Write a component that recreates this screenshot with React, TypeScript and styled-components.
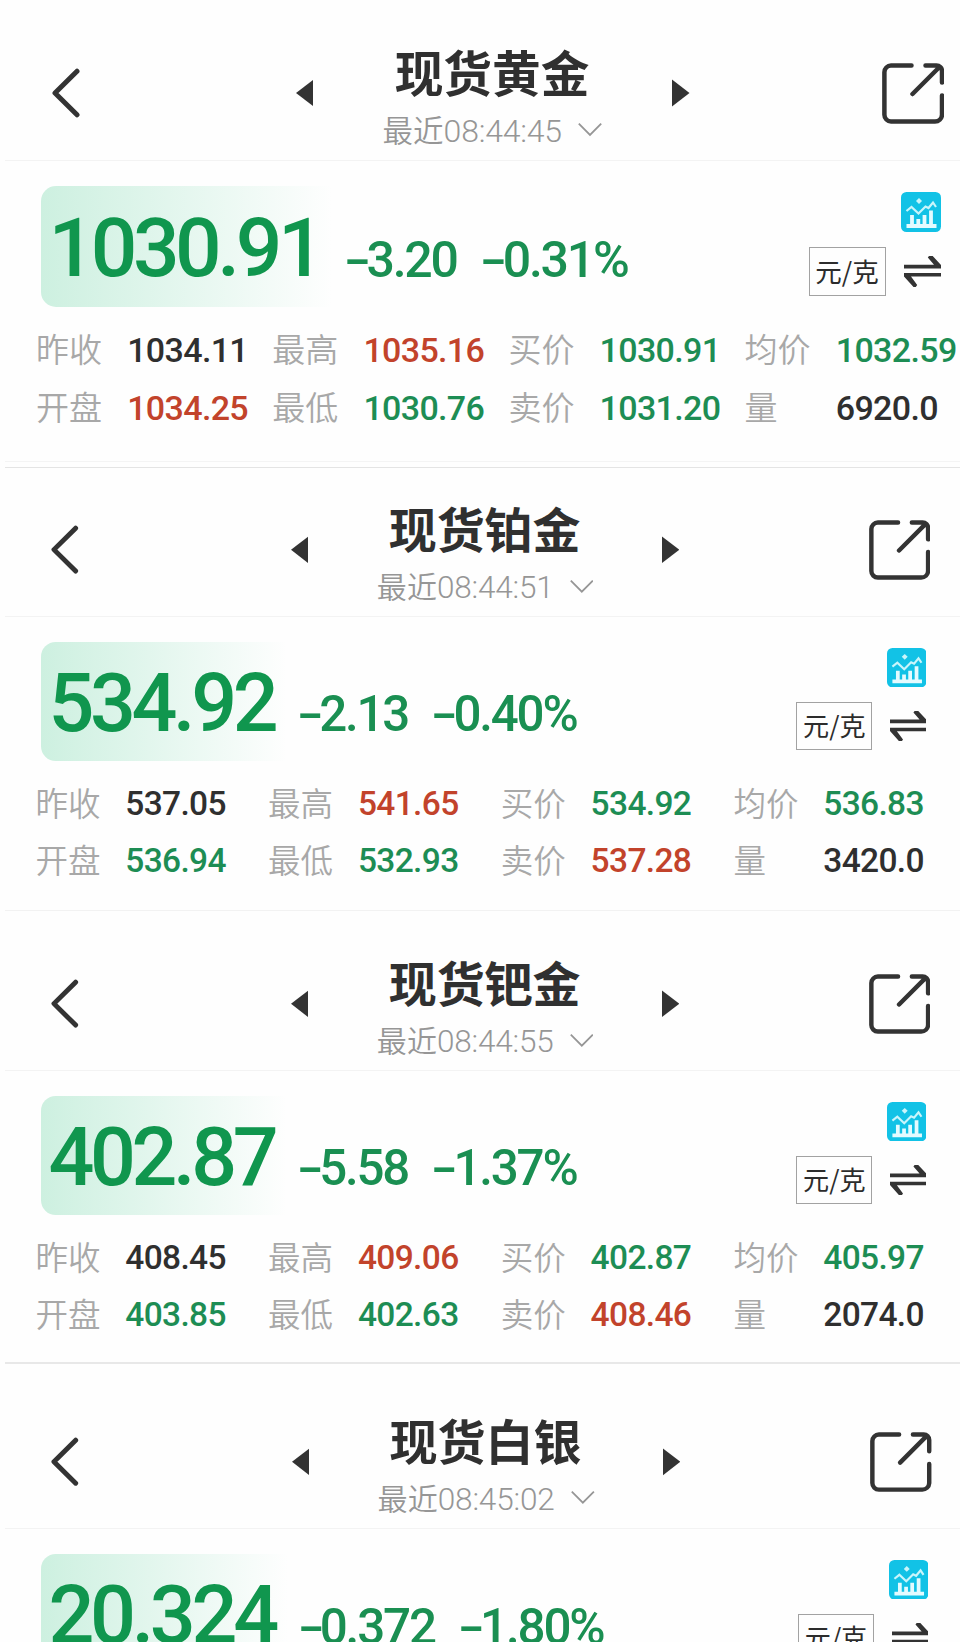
import React from 'react';
import styled, { createGlobalStyle } from 'styled-components';

const GlobalStyle = createGlobalStyle`
  * { box-sizing: border-box; }
  html, body { margin: 0; background: #fefefe; }
  body { height: 1642px; overflow: hidden; }
`;

const cjk = '"Noto Sans CJK SC", sans-serif';
const digits = 'Roboto, "Noto Sans CJK SC", sans-serif';

/* Sizes are given in design units; every panel sets its own --u. */
const u = (n: number) => `calc(${n} * var(--u))`;

type Tone = 'up' | 'down' | 'flat';
const tones: Record<Tone, string> = { up: '#c2432b', down: '#1d8d54', flat: '#2f2f2f' };

const Page = styled.main`
  width: 960px;
  height: 1642px;
  overflow: hidden;
  background: #fefefe;
  display: flex;
  flex-direction: column;
`;

const Panel = styled.section<{ $scale: number; $height: number }>`
  --u: ${p => p.$scale}px;
  flex: none;
  width: ${u(960)};
  height: ${p => p.$height}px;
  display: flex;
  flex-direction: column;
`;

const Divider = styled.hr<{ $color: string; $size?: number; $gap?: number }>`
  flex: none;
  width: 955px;
  height: ${p => p.$size ?? 1}px;
  margin: ${p => p.$gap ?? 0}px 0 0 5px;
  border: 0;
  background: ${p => p.$color};
`;

const Header = styled.header<{ $height: number }>`
  flex: none;
  height: ${p => p.$height}px;
  padding-left: ${u(52)};
  display: flex;
  align-items: flex-end;
`;

const HeaderRow = styled.div`
  height: ${u(134)};
  display: flex;
  align-items: center;
  color: #333;
  svg { display: block; flex: none; }
`;

const BackIcon = styled.svg`
  width: ${u(28)};
  height: ${u(50)};
  margin-right: ${u(215.5)};
`;

const Arrow = styled.svg`
  width: ${u(17.5)};
  height: ${u(28)};
`;

const ShareIcon = styled.svg`
  width: ${u(62)};
  height: ${u(61)};
  margin-left: ${u(192.5)};
`;

const Heading = styled.div`
  width: ${u(359)};
  height: 100%;
  padding-top: ${u(16.5)};
  display: flex;
  flex-direction: column;
  align-items: center;
  gap: ${u(11.5)};
`;

const Title = styled.h1`
  margin: 0 ${u(1)} 0 0;
  font: 700 ${u(48.7)} / ${u(56)} ${cjk};
  color: #303030;
  white-space: nowrap;
`;

const Updated = styled.div`
  display: flex;
  align-items: center;
  gap: ${u(16.5)};
  height: ${u(40)};
  color: #969696;
  font: 350 ${u(30.5)} / ${u(40)} ${cjk};
  white-space: nowrap;
`;

const Clock = styled.span`
  font: 350 ${u(32)} / ${u(40)} ${digits};
  letter-spacing: ${u(-0.2)};
`;

const ChevronIcon = styled.svg`
  width: ${u(24)};
  height: ${u(14)};
`;

const Quote = styled.div`
  flex: none;
  height: ${u(121)};
  margin-top: ${u(25)};
  padding: 0 ${u(19.5)} 0 41px;
  display: flex;
`;

const PriceChip = styled.div<{ $width: number }>`
  flex: none;
  width: ${p => u(p.$width)};
  padding: ${u(2)} 0 0 ${u(7.5)};
  border-radius: ${u(15)};
  background: linear-gradient(90deg, #cdf0e0 0%, #e2f6ed 42%, rgba(254, 254, 254, 0) 96%);
  color: #10964e;
  font: 550 ${u(82)} / ${u(121)} ${digits};
  letter-spacing: ${u(-4.4)};
  white-space: nowrap;
`;

const Change = styled.div`
  flex: 1;
  padding-top: ${u(36)};
  display: flex;
  gap: ${u(23.5)};
  color: #1a8f52;
  font: 550 ${u(50)} / ${u(75)} ${digits};
  letter-spacing: ${u(-2.2)};
  white-space: nowrap;
`;

const Sign = styled.span`
  display: inline-block;
  font-family: Inter, sans-serif;
  transform: scaleX(1.25);
  transform-origin: 0 50%;
  margin: 0 ${u(2.5)} 0 ${u(-1)};
`;

const Tools = styled.div`
  flex: none;
  padding-top: ${u(6)};
  display: flex;
  flex-direction: column;
  align-items: flex-end;
  gap: ${u(15)};
  svg { display: block; }
`;

const ChartIcon = styled.svg`
  width: ${u(40)};
  height: ${u(40)};
`;

const UnitRow = styled.div`
  display: flex;
  align-items: center;
  gap: ${u(18)};
`;

const UnitBox = styled.span`
  width: ${u(77)};
  height: ${u(49)};
  border: 1px solid #a2a2a2;
  color: #2c2c2c;
  font: 400 ${u(26.5)} / ${u(45)} ${cjk};
  text-align: center;
  white-space: nowrap;
`;

const SwapIcon = styled.svg`
  width: ${u(37)};
  height: ${u(31)};
`;

const Stats = styled.dl`
  margin: ${u(14)} 0 0;
  padding-left: ${u(36)};
  display: grid;
  grid-template-columns: repeat(4, ${u(236.2)});
  grid-auto-rows: ${u(58)};
`;

const Stat = styled.div`
  display: grid;
  grid-template-columns: ${u(91.2)} auto;
  align-items: center;
  white-space: nowrap;
`;

const Label = styled.dt`
  padding-bottom: ${u(4)};
  font: 350 ${u(33)} / ${u(54)} ${cjk};
  color: #a8a8a8;
`;

const Value = styled.dd<{ $tone: Tone }>`
  margin: 0;
  font: 480 ${u(34)} / ${u(58)} ${digits};
  letter-spacing: ${u(-0.65)};
  color: ${p => tones[p.$tone]};
`;

interface Metal {
  name: string;
  time: string;
  price: string;
  chip: number;
  change: string;
  percent: string;
  stats: [string, string, Tone][];
  scale: number;
  header: number;
  height: number;
}

const metals: Metal[] = [
  {
    name: '现货黄金', time: '08:44:45', price: '1030.91', chip: 303, change: '3.20', percent: '0.31%',
    scale: 1, header: 160, height: 461,
    stats: [
      ['昨收', '1034.11', 'flat'], ['最高', '1035.16', 'up'], ['买价', '1030.91', 'down'], ['均价', '1032.59', 'down'],
      ['开盘', '1034.25', 'up'], ['最低', '1030.76', 'down'], ['卖价', '1031.20', 'down'], ['量', '6920.0', 'flat'],
    ],
  },
  {
    name: '现货铂金', time: '08:44:51', price: '534.92', chip: 260, change: '2.13', percent: '0.40%',
    scale: 0.985, header: 148, height: 442,
    stats: [
      ['昨收', '537.05', 'flat'], ['最高', '541.65', 'up'], ['买价', '534.92', 'down'], ['均价', '536.83', 'down'],
      ['开盘', '536.94', 'down'], ['最低', '532.93', 'down'], ['卖价', '537.28', 'up'], ['量', '3420.0', 'flat'],
    ],
  },
  {
    name: '现货钯金', time: '08:44:55', price: '402.87', chip: 260, change: '5.58', percent: '1.37%',
    scale: 0.985, header: 159, height: 451,
    stats: [
      ['昨收', '408.45', 'flat'], ['最高', '409.06', 'up'], ['买价', '402.87', 'down'], ['均价', '405.97', 'down'],
      ['开盘', '403.85', 'down'], ['最低', '402.63', 'down'], ['卖价', '408.46', 'up'], ['量', '2074.0', 'flat'],
    ],
  },
  {
    name: '现货白银', time: '08:45:02', price: '20.324', chip: 260, change: '0.372', percent: '1.80%',
    scale: 0.987, header: 164, height: 320, stats: [],
  },
];

const MetalPanel = ({ metal }: { metal: Metal }) => (
  <Panel $scale={metal.scale} $height={metal.height}>
    <Header $height={metal.header}>
      <HeaderRow>
        <BackIcon viewBox="0 0 28 50" fill="none" stroke="currentColor" strokeWidth="5" strokeLinecap="round" strokeLinejoin="round">
          <path d="M25 3.200 3 25l22 21.800" />
        </BackIcon>
        <Arrow viewBox="0 0 17.500 28" fill="currentColor"><path d="M17.500 .5v27L0 14z" /></Arrow>
        <Heading>
          <Title>{metal.name}</Title>
          <Updated>
            <span>最近<Clock>{metal.time}</Clock></span>
            <ChevronIcon viewBox="0 0 24 14" fill="none" stroke="currentColor" strokeWidth="1.8">
              <path d="M.8 .7 12 11.900 23.200 .7" />
            </ChevronIcon>
          </Updated>
        </Heading>
        <Arrow viewBox="0 0 17.500 28" fill="currentColor"><path d="M0 .5v27L17.500 14z" /></Arrow>
        <ShareIcon viewBox="0 0 62 61" fill="none" stroke="currentColor" strokeWidth="4.500" strokeLinecap="round">
          <path d="M29.500 2.600H9a6.600 6.600 0 0 0-6.600 6.600v42.600A6.600 6.600 0 0 0 9 58.400h44a7 7 0 0 0 7-6.600V32.500" />
          <path d="M43.500 2.600H54.500a5.500 5.500 0 0 1 5.500 5.500v11.500M57 4.500 30.500 31" />
        </ShareIcon>
      </HeaderRow>
    </Header>
    <Divider $color="#f3f3f3" />
    <Quote>
      <PriceChip $width={metal.chip}>{metal.price}</PriceChip>
      <Change>
        <span><Sign>-</Sign>{metal.change}</span>
        <span><Sign>-</Sign>{metal.percent}</span>
      </Change>
      <Tools>
        <ChartIcon viewBox="0 0 40 40" fill="none">
          <rect width="40" height="40" rx="5.500" fill="#12c2e6" />
          <path d="M5.500 34h30M11 23v11M17.300 27v7M23.500 23v11M30 18.500v15.500" stroke="#e4fbff" strokeWidth="3.800" />
          <path d="m5.500 19 5-4 7 6.500 7-7 3 1.500 4.500-5.500 3 4.500" stroke="#c9f5fb" strokeWidth="2.200" />
          <path d="m18 6 3 3-3 3-3-3z" fill="#c9f5fb" />
        </ChartIcon>
        <UnitRow>
          <UnitBox>元/克</UnitBox>
          <SwapIcon viewBox="0 0 37 31" fill="#333">
            <path d="M0 8.700h30L23.800 1.600 25 0h3.700L37 8.900v3.500H0z" />
            <path d="M37 20.600H7l6.200 8.400-1.400 2H9.500L0 20.400V17h37z" />
          </SwapIcon>
        </UnitRow>
      </Tools>
    </Quote>
    <Stats>
      {metal.stats.map(([label, value, tone]) => (
        <Stat key={label}>
          <Label>{label}</Label>
          <Value $tone={tone}>{value}</Value>
        </Stat>
      ))}
    </Stats>
  </Panel>
);

export default function App() {
  return (
    <>
      <GlobalStyle />
      <Page>
        <MetalPanel metal={metals[0]} />
        <Divider $color="#f4f4f4" />
        <Divider $color="#e4e4e4" $gap={5} />
        <MetalPanel metal={metals[1]} />
        <Divider $color="#f2f2f2" />
        <MetalPanel metal={metals[2]} />
        <Divider $color="#e8e8e8" $size={2} />
        <MetalPanel metal={metals[3]} />
      </Page>
    </>
  );
}
